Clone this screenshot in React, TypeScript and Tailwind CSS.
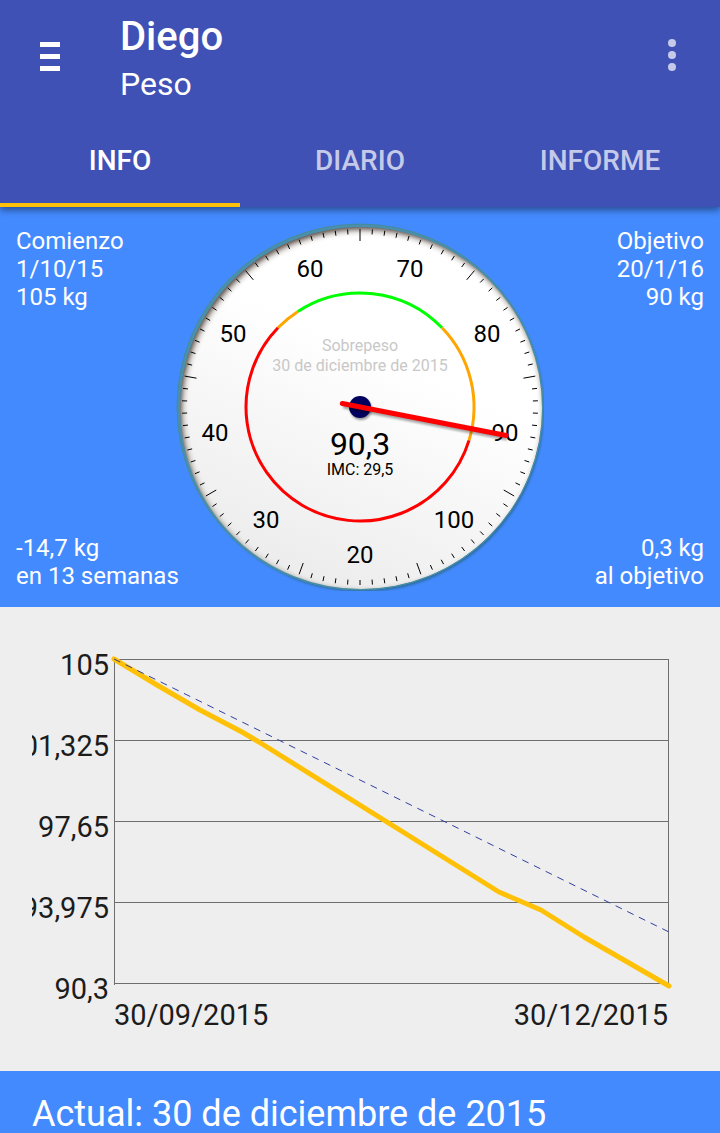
import React from 'react'

const tabs = ['INFO', 'DIARIO', 'INFORME']

const dialNumbers = [20, 30, 40, 50, 60, 70, 80, 90, 100]

// BMI zones around the dial, angles in degrees clockwise from the top
const zones = [
  { from: -46, to: -33, color: '#ffa500' },
  { from: -33, to: 46, color: '#00ff00' },
  { from: 46, to: 107, color: '#ffa500' },
  { from: 107, to: 314, color: '#ff0000' },
]

const yLabels = ['105', '101,325', '97,65', '93,975', '90,3']

const CENTER = 184

const polar = (angle: number, radius: number) => {
  const rad = (angle * Math.PI) / 180
  return {
    x: CENTER + radius * Math.sin(rad),
    y: CENTER - radius * Math.cos(rad),
  }
}

const arc = (from: number, to: number, radius: number) => {
  const a = polar(from, radius)
  const b = polar(to, radius)
  const large = to - from > 180 ? 1 : 0
  return `M${a.x} ${a.y}A${radius} ${radius} 0 ${large} 1 ${b.x} ${b.y}`
}

const Header = () => (
  <header className="relative z-10 bg-[#3f51b5] text-white shadow-[0_3px_7px_rgba(0,0,0,0.45)]">
    <div className="flex h-28 items-center pr-6 pl-8">
      <button type="button" aria-label="Menú" className="flex w-9 flex-col gap-[7px] px-2">
        <span className="h-[5px] w-5 bg-white" />
        <span className="h-[5px] w-5 bg-white" />
        <span className="h-[5px] w-5 bg-white" />
      </button>
      <div className="ml-[52px] flex-1 pt-1">
        <h1 className="text-[40px] leading-[52px] font-medium">Diego</h1>
        <p className="text-[32px] leading-[42px]">Peso</p>
      </div>
      <button type="button" aria-label="Más opciones" className="flex w-12 flex-col items-center gap-1 pb-0.5">
        <span className="size-2 rounded-full bg-[#c5cae9]" />
        <span className="size-2 rounded-full bg-[#c5cae9]" />
        <span className="size-2 rounded-full bg-[#c5cae9]" />
      </button>
    </div>
    <nav className="grid grid-cols-3">
      {tabs.map((tab, i) => (
        <button
          key={tab}
          type="button"
          className={
            i === 0
              ? 'h-[95px] border-b-4 border-[#ffc107] pt-1.5 text-[28px] font-medium text-white'
              : 'h-[95px] border-b-4 border-transparent pt-1.5 text-[28px] font-medium text-[#c5cae9]'
          }
        >
          {tab}
        </button>
      ))}
    </nav>
  </header>
)

const Gauge = () => {
  const tip = polar(101, 149)
  const tail = polar(281, 18)
  return (
    <svg viewBox="0 0 368 368" className="size-[368px] shrink-0" role="img" aria-label="Peso 90,3">
      <defs>
        <linearGradient id="face" x1="0.7" y1="0.1" x2="0.3" y2="1">
          <stop offset="0.3" stopColor="#ffffff" />
          <stop offset="1" stopColor="#ebebeb" />
        </linearGradient>
        <filter id="soft" x="-10%" y="-10%" width="120%" height="120%">
          <feGaussianBlur stdDeviation="3" />
        </filter>
        <filter id="softer" x="-10%" y="-10%" width="120%" height="120%">
          <feGaussianBlur stdDeviation="1" />
        </filter>
        <clipPath id="rim">
          <circle cx="184" cy="184" r="183" />
        </clipPath>
      </defs>
      <circle cx="186" cy="187" r="182" fill="#2f6fa8" filter="url(#softer)" />
      <circle cx="184" cy="184" r="183" fill="url(#face)" />
      <g clipPath="url(#rim)" fill="none">
        <circle cx="187" cy="188" r="186" stroke="#3a2a20" strokeWidth="8" filter="url(#soft)" />
        <circle cx="185" cy="185" r="183" stroke="#4a90ad" strokeWidth="4" />
      </g>
      <circle cx="184" cy="184" r="183" fill="none" stroke="#438ba0" />

      {Array.from({ length: 90 }, (_, i) => {
        const outer = polar(i * 4, 178)
        const inner = polar(i * 4, i % 10 === 0 ? 166 : 173)
        return <line key={i} x1={outer.x} y1={outer.y} x2={inner.x} y2={inner.y} stroke="#000" />
      })}

      {zones.map((zone) => (
        <path key={zone.from} d={arc(zone.from, zone.to, 114)} fill="none" stroke={zone.color} strokeWidth="3" />
      ))}

      <g textAnchor="middle" fill="#000">
        {dialNumbers.map((n, i) => {
          const p = polar(180 + i * 40, 147)
          return (
            <text key={n} x={Math.round(p.x)} y={Math.floor(p.y) + 9} fontSize="24">
              {n}
            </text>
          )
        })}
        <text x="184" y="128" fontSize="16" fill="#c8c8c8">Sobrepeso</text>
        <text x="184" y="148" fontSize="16" fill="#c8c8c8">30 de diciembre de 2015</text>
        <text x="184" y="232" fontSize="32">90,3</text>
        <text x="184" y="252" fontSize="16">IMC: 29,5</text>
      </g>

      <circle cx="185" cy="186" r="11" fill="#000" opacity="0.4" filter="url(#softer)" />
      <circle cx="184" cy="184" r="11" fill="#00005f" />
      <line x1={tail.x + 1} y1={tail.y + 3} x2={tip.x + 1} y2={tip.y + 3} stroke="#000" strokeOpacity="0.35" strokeWidth="4" filter="url(#softer)" />
      <line x1={tail.x} y1={tail.y} x2={tip.x} y2={tip.y} stroke="#ff0000" strokeWidth="5" strokeLinecap="round" />
    </svg>
  )
}

const Summary = () => (
  <section className="flex justify-between bg-[#448aff] px-4 py-4 text-2xl leading-7 text-white">
    <div className="flex w-0 flex-1 flex-col justify-between pt-1 pb-px whitespace-nowrap">
      <p>Comienzo<br />1/10/15<br />105 kg</p>
      <p>-14,7 kg<br />en 13 semanas</p>
    </div>
    <Gauge />
    <div className="flex w-0 flex-1 flex-col items-end justify-between pt-1 pb-px text-right whitespace-nowrap">
      <p>Objetivo<br />20/1/16<br />90 kg</p>
      <p>0,3 kg<br />al objetivo</p>
    </div>
  </section>
)

const Chart = () => (
  <section className="flex bg-[#eeeeee] px-8 pt-11 pb-[42px] text-[29px] leading-7 text-[#1c1c1c]">
    <div className="flex h-[352px] w-[77px] shrink-0 flex-col justify-between overflow-hidden">
      {yLabels.map((label) => (
        <span key={label} className="flex justify-end">{label}</span>
      ))}
    </div>
    <div className="mr-5 ml-[5px] min-w-0 flex-1 pt-2">
      <svg viewBox="0 0 554 324" preserveAspectRatio="none" className="block h-[324px] w-full overflow-visible" role="img" aria-label="Evolución del peso">
        <g stroke="#6e6e6e" fill="none" shapeRendering="crispEdges">
          {[0, 81, 162, 243, 324].map((y) => (
            <line key={y} x1="0" y1={y + 0.5} x2="554" y2={y + 0.5} vectorEffect="non-scaling-stroke" />
          ))}
          <path d="M0.5 0V326M554.5 0V326" vectorEffect="non-scaling-stroke" />
        </g>
        <path
          d="M0 0L43 26L86 51L128 73L145 83L385 233L427 251L470 278L555 327"
          fill="none"
          stroke="#ffc107"
          strokeWidth="5"
          strokeLinecap="round"
          strokeLinejoin="round"
          vectorEffect="non-scaling-stroke"
        />
        <path d="M0 0L555 273" fill="none" stroke="#303f9f" strokeDasharray="7 6" vectorEffect="non-scaling-stroke" />
      </svg>
      <div className="mt-[18px] flex justify-between">
        <span>30/09/2015</span>
        <span>30/12/2015</span>
      </div>
    </div>
  </section>
)

export default function App() {
  return (
    <main className="bg-[#448aff] font-['Roboto',sans-serif]">
      <Header />
      <Summary />
      <Chart />
      <h2 className="px-8 pt-6 text-4xl leading-[38px] text-white">Actual: 30 de diciembre de 2015</h2>
    </main>
  )
}
